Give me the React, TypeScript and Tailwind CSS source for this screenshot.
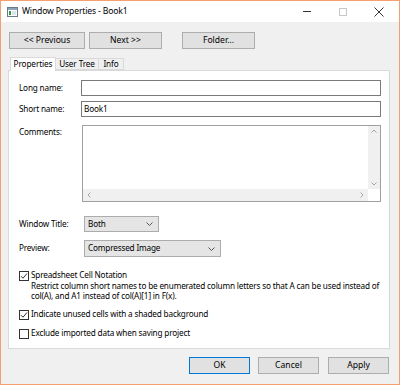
import React from 'react';

function Btn({ label, w, primary }: { label: string; w: string; primary?: boolean }) {
  return (
    <div
      className={`flex h-[17px] ${w} items-center justify-center border bg-[#e1e1e1] text-[8.6px] text-black ${
        primary ? 'border-[#0078d7]' : 'border-[#adadad]'
      }`}
    >
      {label}
    </div>
  );
}

function Check({ checked }: { checked?: boolean }) {
  return (
    <div className="flex h-[10px] w-[10px] shrink-0 items-center justify-center border border-[#333] bg-white">
      {checked && (
        <svg width="8" height="8" viewBox="0 0 8 8">
          <path d="M1 4.2 L3 6.2 L7 1.5" fill="none" stroke="#333" strokeWidth="1" />
        </svg>
      )}
    </div>
  );
}

function Chevron() {
  return (
    <svg width="7" height="4" viewBox="0 0 7 4">
      <path d="M0.5 0.5 L3.5 3.5 L6.5 0.5" fill="none" stroke="#555" strokeWidth="1" />
    </svg>
  );
}

export default function App() {
  return (
    <div
      className="flex h-[385px] w-[400px] flex-col border border-[#f4a070] bg-[#f0f0f0] text-black"
      style={{ fontFamily: '"Noto Sans", "Open Sans", sans-serif' }}
    >
      {/* Title bar */}
      <div className="flex h-[21px] items-center bg-white">
        <svg className="ml-[6px]" width="11" height="10" viewBox="0 0 11 10">
          <rect x="0.5" y="0.5" width="10" height="9" fill="#fff" stroke="#6b7b8a" />
          <rect x="1" y="1" width="9" height="2" fill="#8fa3b8" />
          <rect x="2" y="4" width="2" height="4" fill="#2e9a4a" />
          <rect x="5" y="4" width="4" height="4" fill="#d9e4ef" />
        </svg>
        <span className="ml-[4px] text-[8.6px] tracking-[-0.15px]">Window Properties - Book1</span>
        <div className="ml-auto flex items-center">
          <div className="flex w-[28px] justify-center">
            <div className="h-px w-[8px] bg-[#333]" />
          </div>
          <div className="ml-[8px] flex w-[28px] justify-center">
            <div className="h-[8px] w-[8px] border border-[#c8c8c8]" />
          </div>
          <div className="ml-[8px] mr-[6px] flex w-[28px] justify-center">
            <svg width="10" height="10" viewBox="0 0 10 10">
              <path d="M0.5 0.5 L9.5 9.5 M9.5 0.5 L0.5 9.5" stroke="#333" strokeWidth="1" />
            </svg>
          </div>
        </div>
      </div>

      {/* Nav buttons */}
      <div className="ml-[8px] mt-[10px] flex">
        <Btn label="<< Previous" w="w-[76px]" />
        <div className="ml-[4px]">
          <Btn label="Next >>" w="w-[73px]" />
        </div>
        <div className="ml-[20px]">
          <Btn label="Folder..." w="w-[73px]" />
        </div>
      </div>

      {/* Tabs */}
      <div className="ml-[9px] mt-[8px] flex h-[13px] items-end text-[8.2px] tracking-[-0.1px]">
        <div className="relative z-10 -mb-px flex h-[14px] w-[46px] items-center justify-center border border-b-0 border-[#d9d9d9] bg-white">
          Properties
        </div>
        <div className="flex h-[12px] w-[43px] items-center justify-center border border-l-0 border-[#d9d9d9] bg-[#f0f0f0]">
          User Tree
        </div>
        <div className="flex h-[12px] w-[25px] items-center justify-center border border-l-0 border-[#d9d9d9] bg-[#f0f0f0]">
          Info
        </div>
      </div>

      {/* Panel */}
      <div className="ml-[7px] h-[279px] w-[382px] border border-[#d9d9d9] bg-white pl-[10px] pt-[9px] text-[8.2px] tracking-[-0.17px]">
        <div className="flex items-center">
          <span className="w-[62px]">Long name:</span>
          <div className="h-[16px] w-[300px] border border-[#7a7a7a] bg-white" />
        </div>
        <div className="mt-[5px] flex items-center">
          <span className="w-[62px]">Short name:</span>
          <div className="flex h-[16px] w-[300px] items-center border border-[#7a7a7a] bg-white pl-[2px]">
            Book1
          </div>
        </div>
        <div className="mt-[8px] flex">
          <span className="w-[63px] pt-[1px]">Comments:</span>
          <div className="flex h-[77px] w-[299px] flex-col border border-[#a0a0a0] bg-white">
            <div className="flex flex-1">
              <div className="flex-1" />
              <div className="flex w-[12px] flex-col items-center justify-between bg-[#f0f0f0] py-[3px] text-[#a6a6a6]">
                <svg width="6" height="4" viewBox="0 0 6 4">
                  <path d="M0.5 3.5 L3 1 L5.5 3.5" fill="none" stroke="currentColor" />
                </svg>
                <svg width="6" height="4" viewBox="0 0 6 4">
                  <path d="M0.5 0.5 L3 3 L5.5 0.5" fill="none" stroke="currentColor" />
                </svg>
              </div>
            </div>
            <div className="flex h-[12px]">
              <div className="flex flex-1 items-center justify-between bg-[#f0f0f0] px-[4px] text-[#a6a6a6]">
                <svg width="4" height="6" viewBox="0 0 4 6">
                  <path d="M3.5 0.5 L1 3 L3.5 5.5" fill="none" stroke="currentColor" />
                </svg>
                <svg width="4" height="6" viewBox="0 0 4 6">
                  <path d="M0.5 0.5 L3 3 L0.5 5.5" fill="none" stroke="currentColor" />
                </svg>
              </div>
              <div className="w-[12px] bg-white" />
            </div>
          </div>
        </div>

        <div className="mt-[14px] flex items-center">
          <span className="w-[65px]">Window Title:</span>
          <div className="flex h-[16px] w-[75px] items-center justify-between border border-[#acacac] bg-[#e5e5e5] pl-[3px] pr-[5px]">
            <span>Both</span>
            <Chevron />
          </div>
        </div>
        <div className="mt-[8px] flex items-center">
          <span className="w-[65px]">Preview:</span>
          <div className="flex h-[17px] w-[137px] items-center justify-between border border-[#acacac] bg-[#e5e5e5] pl-[3px] pr-[5px]">
            <span>Compressed Image</span>
            <Chevron />
          </div>
        </div>

        <div className="mt-[13px] flex">
          <div className="pt-[1px]">
            <Check checked />
          </div>
          <div className="ml-[2px] whitespace-nowrap leading-[10.5px]">
            <div>Spreadsheet Cell Notation</div>
            <div>
              Restrict column short names to be enumerated column letters so that A can be used instead of
            </div>
            <div>col(A), and A1 instead of col(A)[1] in F(x).</div>
          </div>
        </div>
        <div className="mt-[8px] flex h-[10px] items-center">
          <Check checked />
          <span className="ml-[2px]">Indicate unused cells with a shaded background</span>
        </div>
        <div className="mt-[9px] flex h-[10px] items-center">
          <Check />
          <span className="ml-[2px]">Exclude imported data when saving project</span>
        </div>
      </div>

      {/* Footer buttons */}
      <div className="ml-[188px] mt-[8px] flex">
        <Btn label="OK" w="w-[61px]" primary />
        <div className="ml-[8px]">
          <Btn label="Cancel" w="w-[61px]" />
        </div>
        <div className="ml-[9px]">
          <Btn label="Apply" w="w-[61px]" />
        </div>
      </div>
    </div>
  );
}
